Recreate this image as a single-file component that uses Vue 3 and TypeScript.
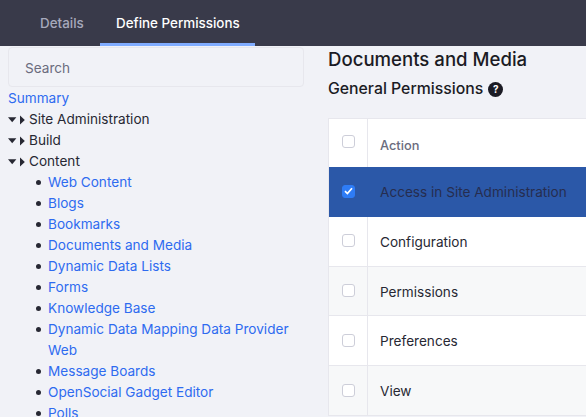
<script setup lang="ts">
const tree = ['Site Administration', 'Build', 'Content']
const links = ['Web Content', 'Blogs', 'Bookmarks', 'Documents and Media', 'Dynamic Data Lists', 'Forms', 'Knowledge Base', 'Dynamic Data Mapping Data Provider Web', 'Message Boards', 'OpenSocial Gadget Editor', 'Polls']
const rows = [
  { name: 'Configuration', tone: 'plain' },
  { name: 'Permissions', tone: 'alt' },
  { name: 'Preferences', tone: 'plain' },
  { name: 'View', tone: 'alt' },
]
</script>

<template>
  <div class="page">
    <nav class="tabs">
      <a class="tab">Details</a>
      <a class="tab active">Define Permissions</a>
    </nav>
    <div class="body">
      <aside class="side">
        <div class="search">Search</div>
        <a class="link">Summary</a>
        <ul class="tree">
          <li v-for="t in tree" :key="t" class="node">
            <svg class="caret" width="18" height="12" viewBox="0 0 18 12">
              <path d="M0 3.3h8.4L4.2 8.2z" fill="#272833" />
              <path d="M12 1.6v8.8l4.8-4.4z" fill="#272833" />
            </svg>
            <span>{{ t }}</span>
          </li>
        </ul>
        <ul class="links">
          <li v-for="l in links" :key="l"><a class="link">{{ l }}</a></li>
        </ul>
      </aside>
      <main class="main">
        <h1 class="title">Documents and Media</h1>
        <h2 class="sub">General Permissions
          <span class="help">?</span>
        </h2>
        <div class="table">
          <div class="row head">
            <div class="check"><span class="box"></span></div>
            <div class="cell">Action</div>
          </div>
          <div class="row selected">
            <div class="check">
              <span class="box on">
                <svg width="9" height="8" viewBox="0 0 9 8"><path d="M1 4.2l2.4 2.4L8 1.2" fill="none" stroke="#fff" stroke-width="1.7" /></svg>
              </span>
            </div>
            <div class="cell">Access in Site Administration</div>
          </div>
          <div v-for="r in rows" :key="r.name" class="row" :class="r.tone">
            <div class="check"><span class="box"></span></div>
            <div class="cell">{{ r.name }}</div>
          </div>
        </div>
      </main>
    </div>
  </div>
</template>

<style>
html, body { margin: 0; background: #f1f2f7; overflow: hidden; }
</style>

<style scoped>
.page {
  width: 586px;
  height: 417px;
  overflow: hidden;
  background: #f1f2f7;
  font-family: Inter, "Liberation Sans", sans-serif;
  font-size: 13.6px;
  color: #272833;
}
.tabs {
  height: 46px;
  box-sizing: border-box;
  background: #393a4a;
  display: flex;
  padding-left: 24px;
}
.tab {
  width: 76px;
  box-sizing: border-box;
  padding-left: 16px;
  line-height: 46px;
  color: #a7a9bc;
  font-size: 13.4px;
  font-weight: 500;
  white-space: nowrap;
}
.tab.active {
  color: #fff;
  height: 46px;
  box-sizing: border-box;
  border-bottom: 3px solid #80acff;
  width: 155px;
}
.body {
  display: flex;
}
.side {
  width: 304px;
  padding-left: 8px;
  box-sizing: border-box;
  margin-right: 24px;
  flex: none;
}
.search {
  height: 40px;
  box-sizing: border-box;
  margin-top: 1px;
  margin-bottom: 1px;
  padding: 0 16px;
  line-height: 40px;
  border: 1px solid #e7e7ed;
  border-radius: 4px;
  color: #6b6c7e;
}
.link {
  color: #2e6bf0;
  display: block;
  line-height: 21px;
}
.tree, .links {
  margin: 0;
  padding: 0;
  list-style: none;
  line-height: 21px;
}
.node {
  display: flex;
  align-items: center;
  height: 21px;
  gap: 3px;
}
.caret { flex: none; }
.links {
  padding-left: 40px;
  color: #272833;
}
.links li {
  position: relative;
}
.links li::before {
  content: "";
  position: absolute;
  left: -12px;
  top: 8px;
  width: 5px;
  height: 5px;
  border-radius: 50%;
  background: #272833;
}
.main {
  flex: none;
  width: 300px;
}
.title {
  margin: 0;
  font-size: 18.6px;
  font-weight: 500;
  line-height: 24px;
  padding-top: 1px;
  color: #1b1b24;
}
.sub {
  margin: 6px 0 0;
  font-size: 15.8px;
  font-weight: 500;
  line-height: 24px;
  color: #1b1b24;
  display: flex;
  align-items: center;
  gap: 5px;
}
.help {
  width: 15px;
  height: 15px;
  border-radius: 50%;
  background: #1b1b24;
  color: #fff;
  font-size: 10px;
  font-weight: 700;
  line-height: 15px;
  text-align: center;
}
.table {
  margin-top: 17px;
  border-top: 1px solid #e7e7ed;
  border-left: 1px solid #e7e7ed;
  background: #fff;
}
.row {
  display: flex;
  height: 49.8px;
  box-sizing: border-box;
  border-bottom: 1px solid #e7e7ed;
}
.check {
  width: 39px;
  flex: none;
  border-right: 1px solid #e7e7ed;
  display: flex;
  justify-content: center;
  padding-top: 17.5px;
  box-sizing: border-box;
}
.box {
  width: 13px;
  height: 13px;
  box-sizing: border-box;
  border: 1px solid #cdced9;
  border-radius: 3px;
  background: #fff;
  display: flex;
  align-items: center;
  justify-content: center;
}
.box.on {
  background: #2e7cf6;
  border-color: #2e7cf6;
}
.cell {
  padding-left: 12px;
  line-height: 51px;
}
.head {
  height: 48px;
  background: #fff;
  border-bottom: none;
}
.head .check { padding-top: 16px; }
.head .cell {
  color: #6b6c7e;
  font-size: 12.8px;
  font-weight: 500;
  line-height: 49px;
  padding-top: 2px;
}
.selected {
  background: #2b58a8;
  border-bottom-color: #2b58a8;
}
.selected .check { border-right-color: #2b58a8; }
.selected .cell { color: #262d4f; }
.alt { background: #f7f8f9; }
.plain { background: #fff; }
</style>
